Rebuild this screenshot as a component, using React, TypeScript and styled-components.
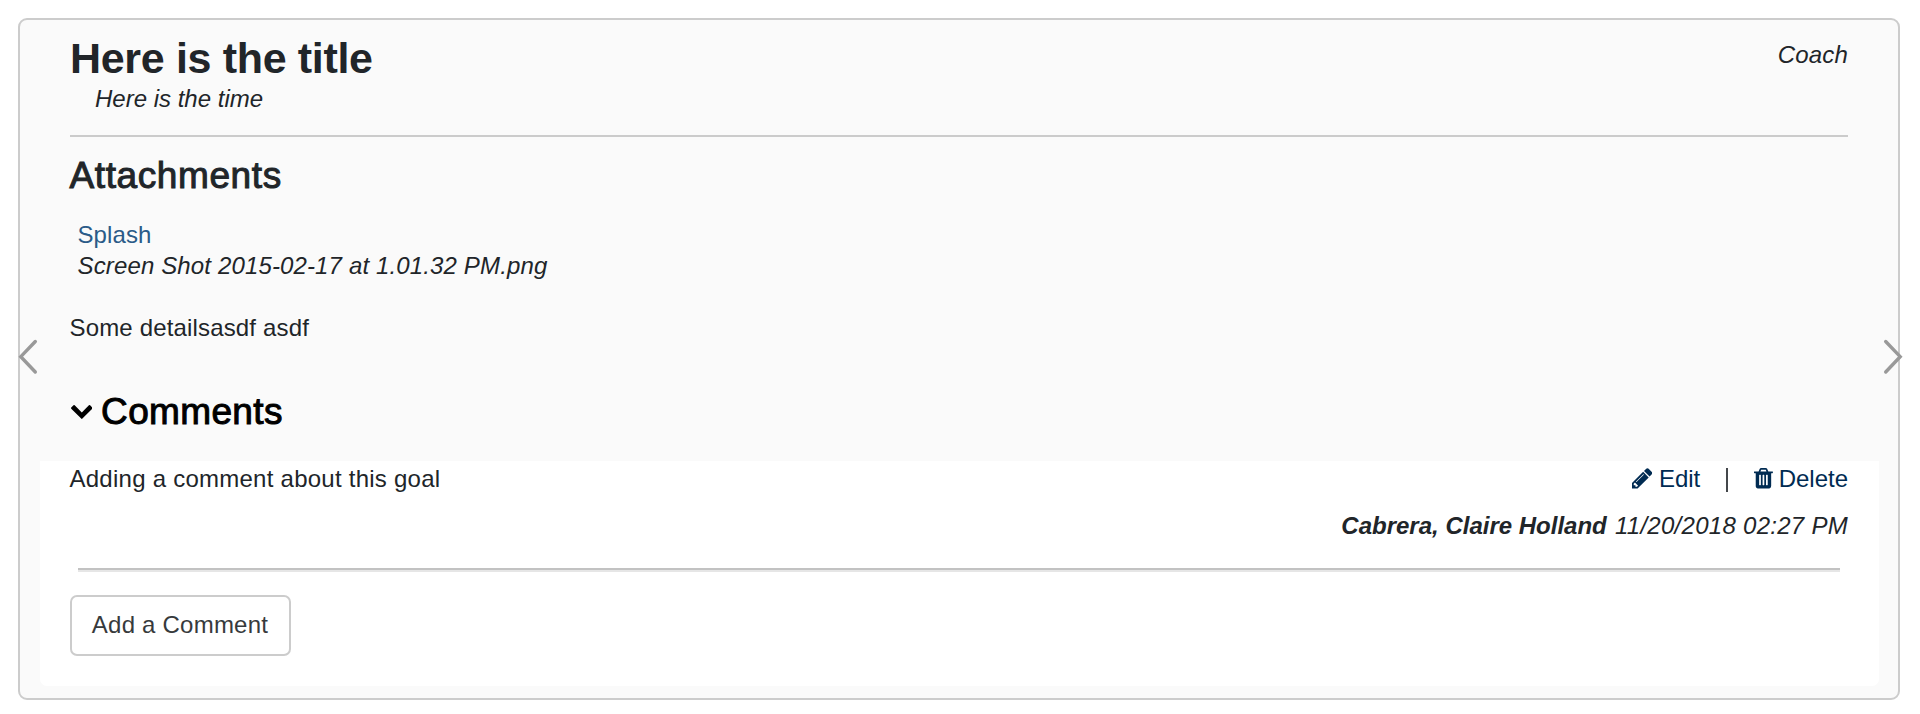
import React from "react";
import styled, { createGlobalStyle } from "styled-components";

const GlobalStyle = createGlobalStyle`
  * { box-sizing: border-box; }
  body {
    margin: 0;
    background: #fff;
    color: #212529;
    font: 24px/31px "Liberation Sans", Arial, sans-serif;
  }
`;

const Page = styled.main`
  height: 714px;
  padding: 18px 20px 14px 18px;
`;

const Card = styled.article`
  position: relative;
  height: 682px;
  border: 2px solid #ccc;
  border-radius: 9px;
  background: #fafafa;
`;

const Header = styled.header`
  display: flex;
  justify-content: space-between;
  height: 117px;
  margin: 0 50px;
  padding-top: 13px;
  border-bottom: 2px solid #cbcbcb;
`;

const Title = styled.h1`
  margin: 0;
  font-size: 43px;
  line-height: 50px;
  letter-spacing: -0.33px;
`;

const Time = styled.div`
  padding-left: 25px;
  font-style: italic;
`;

const Role = styled.div`
  padding-top: 6px;
  font-style: italic;
  letter-spacing: 0.2px;
`;

const Section = styled.section`
  padding: 0 50px 0 49.5px;
`;

const Heading = styled.h2<{ $gap: number; $spacing: number; $color?: string }>`
  display: flex;
  align-items: center;
  gap: 9px;
  margin: ${(p) => p.$gap}px 0 0;
  color: ${(p) => p.$color ?? "inherit"};
  font-size: 37px;
  font-weight: 400;
  line-height: 44px;
  letter-spacing: ${(p) => p.$spacing}px;
  -webkit-text-stroke: 1px currentColor;
  svg { margin-left: 1px; }
`;

const Attachment = styled.div`
  display: flex;
  flex-direction: column;
  align-items: flex-start;
  padding: 21px 0 0 8px;
`;

const FileLink = styled.a`
  color: #2a5b88;
  letter-spacing: 0.1px;
`;

const FileName = styled.span`
  font-style: italic;
  letter-spacing: 0.14px;
`;

const Details = styled.p`
  margin: 31px 0 0;
  letter-spacing: 0.16px;
`;

const Comments = styled.section`
  height: 225px;
  margin: 27px 19px 0 20px;
  padding: 2px 31px 0 29.5px;
  border-radius: 0 0 7px 7px;
  background: #fff;
`;

const CommentRow = styled.div`
  display: flex;
  justify-content: space-between;
  letter-spacing: 0.25px;
`;

const Actions = styled.div`
  display: flex;
  align-items: center;
  letter-spacing: 0;
`;

const Action = styled.a<{ $gap: number }>`
  display: flex;
  align-items: center;
  gap: ${(p) => p.$gap}px;
  color: #002b52;
`;

const Separator = styled.span`
  width: 2px;
  height: 24px;
  margin: 2px 26px 0 25.5px;
  background: #44474b;
`;

const Byline = styled.div`
  margin-top: 15.5px;
  text-align: right;
  font-style: italic;
`;

const Author = styled.strong`
  margin-right: 1.5px;
`;

const Stamp = styled.span`
  letter-spacing: 0.28px;
`;

const Rule = styled.hr`
  height: 4px;
  margin: 27.5px 8px 23px 8.5px;
  border: 0;
  border-top: 2px solid #c2c2c2;
  border-bottom: 2px solid #e6e6e6;
`;

const AddButton = styled.button`
  display: block;
  width: 221px;
  height: 61px;
  padding: 0 0 2px;
  border: 2px solid #ccc;
  border-radius: 7px;
  background: #fff;
  color: #373a3c;
  font: inherit;
  letter-spacing: 0.22px;
`;

const Arrow = styled.button<{ $side: "left" | "right" }>`
  position: absolute;
  top: 319px;
  ${(p) => p.$side}: ${(p) => (p.$side === "left" ? "-2px" : "-5px")};
  display: flex;
  padding: 0;
  border: 0;
  background: none;
  svg { transform: ${(p) => (p.$side === "right" ? "scaleX(-1)" : "none")}; }
`;

const ArrowIcon = () => (
  <svg width="20" height="36" viewBox="0 0 20 36" fill="none" stroke="#999" strokeWidth="3.4" strokeLinecap="round">
    <path d="M17.3 2.5 2.8 17.7 17.3 33" />
  </svg>
);

const PencilIcon = () => (
  <svg width="20.3" height="20.6" viewBox="128 128 1515 1536" fill="currentColor">
    <path d="M491 1536l91-91-235-235-91 91v107h128v128h107zm523-928q0-22-22-22-10 0-17 7l-542 542q-7 7-7 17 0 22 22 22 10 0 17-7l542-542q7-7 7-17zm-54-192l416 416-832 832h-416v-416zm683 96q0 53-37 90l-166 166-416-416 166-165q36-38 90-38 53 0 91 38l235 234q37 39 37 91z" />
  </svg>
);

const TrashIcon = () => (
  <svg width="18.9" height="20.6" viewBox="0 128 1408 1536" fill="currentColor">
    <path d="M512 1376v-704q0-14-9-23t-23-9h-64q-14 0-23 9t-9 23v704q0 14 9 23t23 9h64q14 0 23-9t9-23zm256 0v-704q0-14-9-23t-23-9h-64q-14 0-23 9t-9 23v704q0 14 9 23t23 9h64q14 0 23-9t9-23zm256 0v-704q0-14-9-23t-23-9h-64q-14 0-23 9t-9 23v704q0 14 9 23t23 9h64q14 0 23-9t9-23zm-544-992h448l-48-117q-7-9-17-11h-317q-10 2-17 11zm928 32v64q0 14-9 23t-23 9h-96v948q0 83-47 143.500t-113 60.500h-832q-66 0-113-58.500t-47-141.500v-952h-96q-14 0-23-9t-9-23v-64q0-14 9-23t23-9h309l70-167q15-37 54-63t79-26h320q40 0 79 26t54 63l70 167h309q14 0 23 9t9 23z" />
  </svg>
);

const ChevronIcon = () => (
  <svg width="21.6" height="13.9" viewBox="90 533 1612 1035" fill="currentColor">
    <path d="M1683 808l-742 741q-19 19-45 19t-45-19l-742-741q-19-19-19-45.500t19-45.500l166-165q19-19 45-19t45 19l531 531 531-531q19-19 45-19t45 19l166 165q19 19 19 45.500t-19 45.500z" />
  </svg>
);

export default function App() {
  return (
    <Page>
      <GlobalStyle />
      <Card>
        <Header>
          <div>
            <Title>Here is the title</Title>
            <Time>Here is the time</Time>
          </div>
          <Role>Coach</Role>
        </Header>
        <Section>
          <Heading $gap={17} $spacing={0.6}>Attachments</Heading>
          <Attachment>
            <FileLink>Splash</FileLink>
            <FileName>Screen Shot 2015-02-17 at 1.01.32 PM.png</FileName>
          </Attachment>
          <Details>Some detailsasdf asdf</Details>
          <Heading $gap={47} $spacing={0.35} $color="#000">
            <ChevronIcon />
            Comments
          </Heading>
        </Section>
        <Comments>
          <CommentRow>
            <span>Adding a comment about this goal</span>
            <Actions>
              <Action $gap={7}><PencilIcon />Edit</Action>
              <Separator />
              <Action $gap={6}><TrashIcon />Delete</Action>
            </Actions>
          </CommentRow>
          <Byline>
            <Author>Cabrera, Claire Holland</Author> <Stamp>11/20/2018 02:27 PM</Stamp>
          </Byline>
          <Rule />
          <AddButton type="button">Add a Comment</AddButton>
        </Comments>
        <Arrow $side="left" aria-label="Previous"><ArrowIcon /></Arrow>
        <Arrow $side="right" aria-label="Next"><ArrowIcon /></Arrow>
      </Card>
    </Page>
  );
}
